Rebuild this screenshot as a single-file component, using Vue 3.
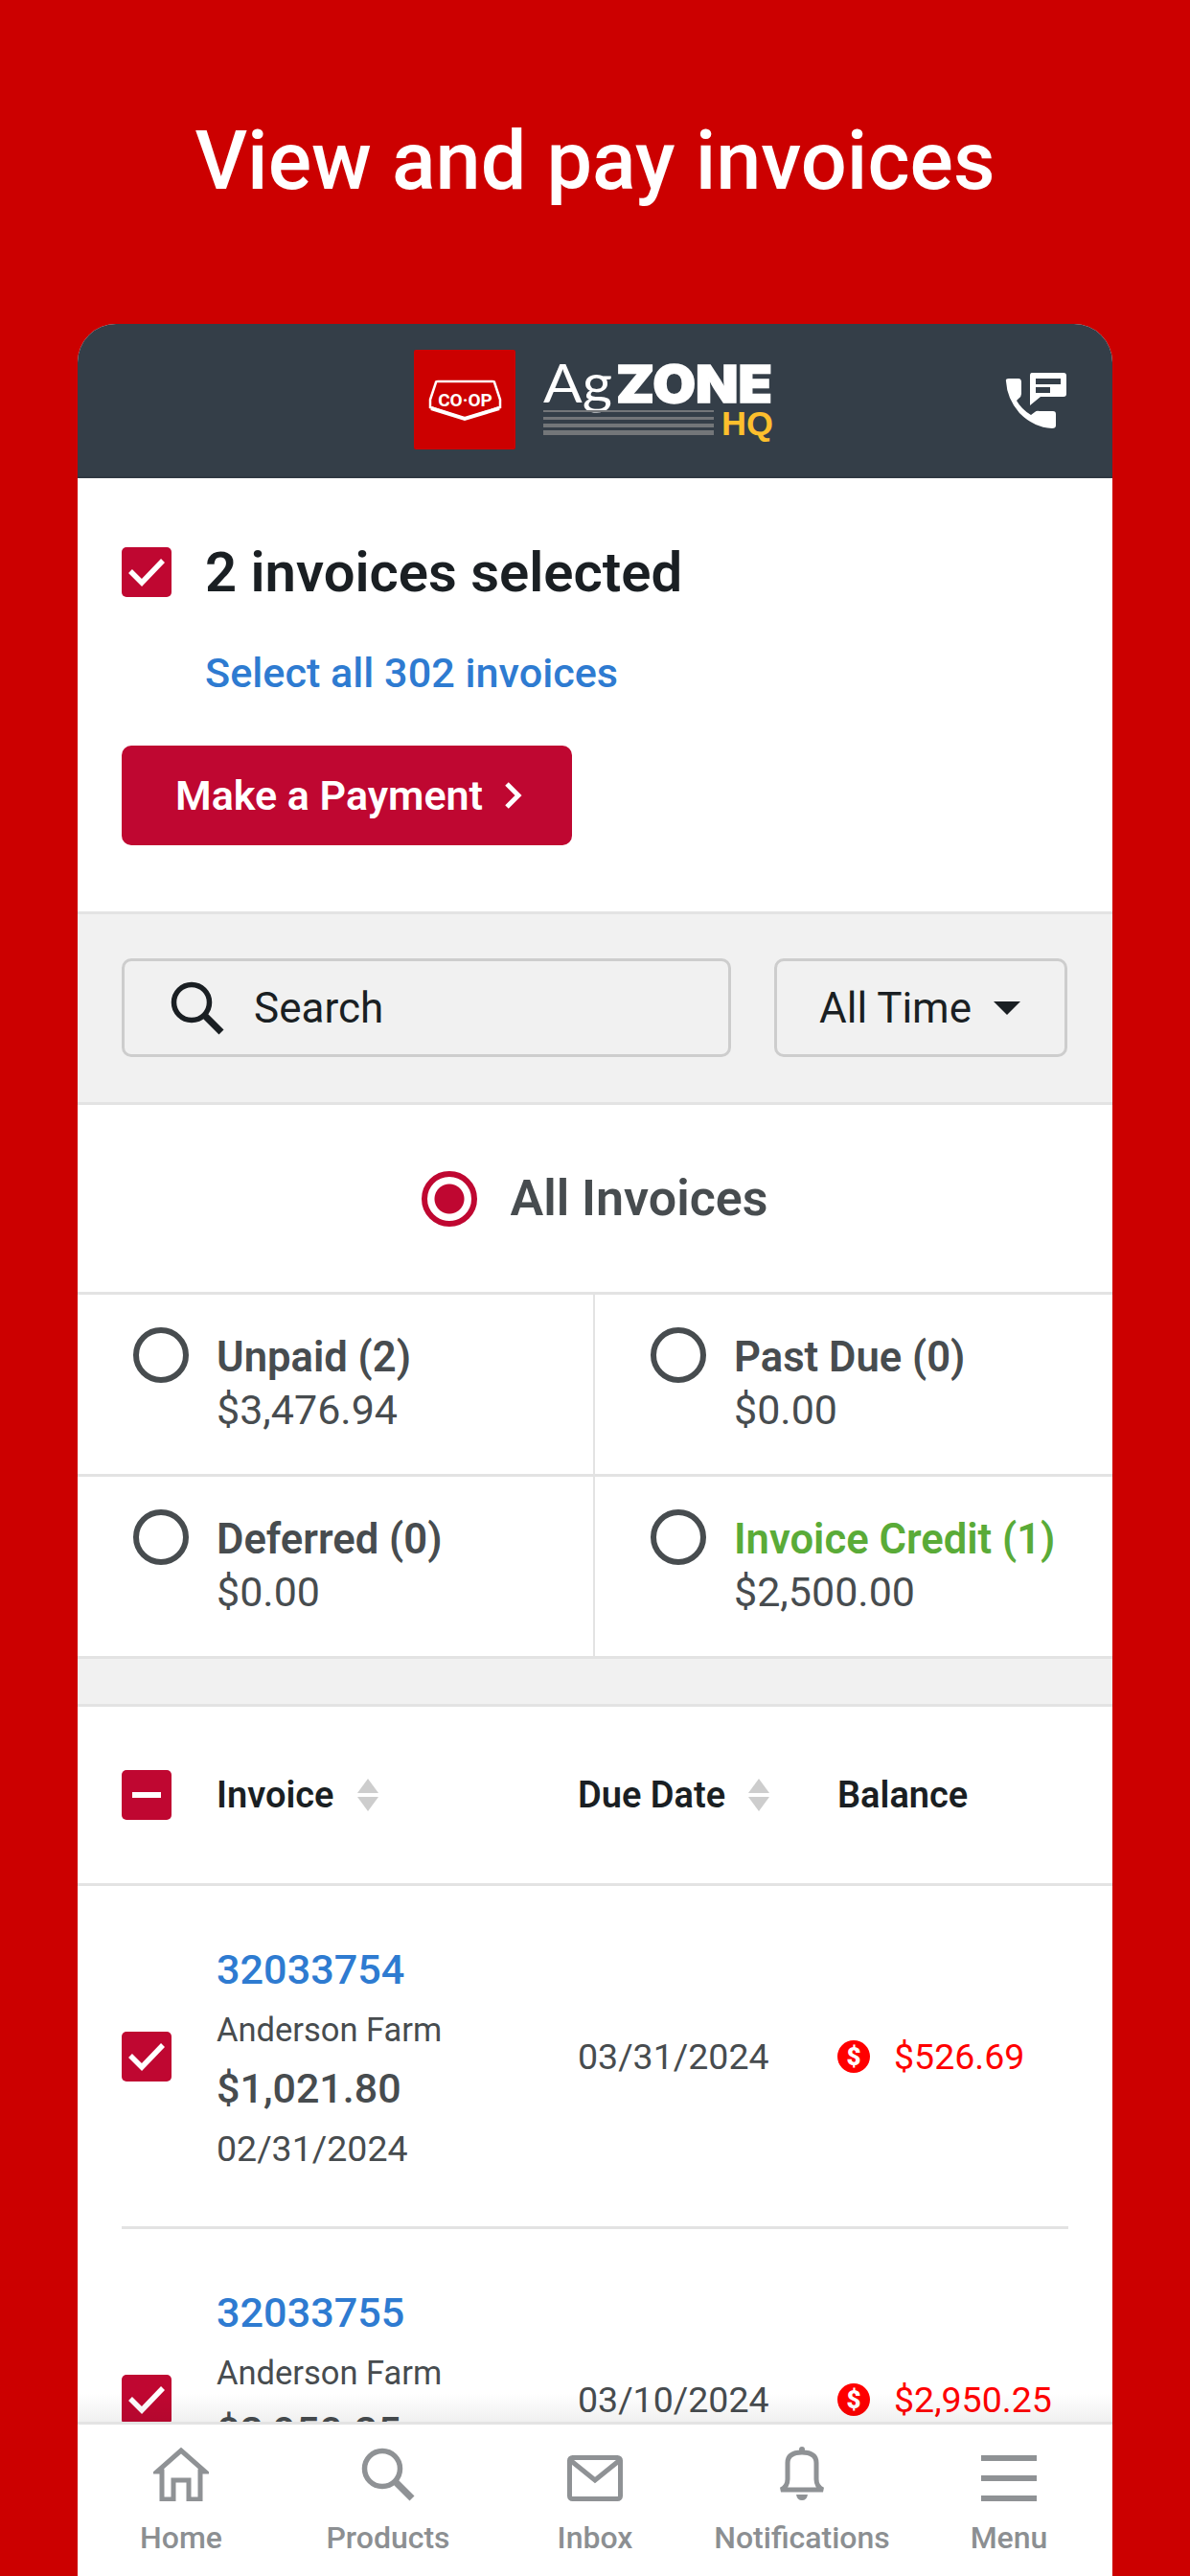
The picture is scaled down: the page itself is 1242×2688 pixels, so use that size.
<template>
  <div class="screen">
    <h1 class="title">View and pay invoices</h1>
    <div class="card">
      <header class="topbar">
        <div></div>
        <svg class="logo" width="380" height="106" viewBox="0 0 380 106">
          <rect x="0" y="0" width="106" height="104" rx="2" fill="#cc0000" />
          <path d="M23 34 Q23 33 25 33 H82 Q84 33 84 34 L90 52 V60 L53 72 L17 60 V52 Z" fill="none" stroke="#fff" stroke-width="2.5" />
          <path d="M18 61 L53 72 L89 61" fill="none" stroke="#fff" stroke-width="4" />
          <text x="53.5" y="59" class="logo-coop" text-anchor="middle">CO·OP</text>
          <text x="135" y="55" class="logo-ag" textLength="72" lengthAdjust="spacingAndGlyphs">Ag</text>
          <text x="211" y="55" class="logo-zone" textLength="163" lengthAdjust="spacingAndGlyphs">ZONE</text>
          <rect x="135" y="63" width="178" height="2" fill="#737679" />
          <rect x="135" y="70" width="178" height="3" fill="#737679" />
          <rect x="135" y="77" width="178" height="4" fill="#737679" />
          <rect x="135" y="84" width="178" height="5" fill="#737679" />
          <text x="321" y="89" class="logo-hq" textLength="54" lengthAdjust="spacingAndGlyphs">HQ</text>
        </svg>
        <svg class="phone" width="64" height="58" viewBox="0 0 64 58">
          <path d="M1 9 Q0 6 4 6 H14 Q17 6 17 10 V22 Q17 25 14 27 L12 29 Q17 38 27 44 L31 41 Q33 39 36 40 H50 Q53 40 53 43 V55 Q53 58 49 58 Q30 57 15 42 Q2 27 1 9 Z" fill="#fff" />
          <path d="M28 0 H61 Q64 0 64 3 V22 Q64 25 61 25 H37 L26 34 V3 Q26 0 28 0 Z" fill="#fff" />
          <rect x="32" y="6" width="26" height="6" fill="#343e48" />
          <rect x="32" y="15" width="15" height="6" fill="#343e48" />
        </svg>
      </header>

      <div class="content">
        <section class="selection">
          <div class="selected-row">
            <span class="check"><svg width="40" height="30" viewBox="0 0 40 30"><path d="M3 14 L15 26 L37 3" fill="none" stroke="#fff" stroke-width="5.5" /></svg></span>
            <span class="selected-text">2 invoices selected</span>
          </div>
          <a class="select-all">Select all 302 invoices</a>
          <button class="pay-btn">
            Make a Payment
            <svg width="19" height="30" viewBox="0 0 19 30"><path d="M3 3 L15 15 L3 27" fill="none" stroke="#fff" stroke-width="5" /></svg>
          </button>
        </section>

        <section class="filters">
          <div class="search">
            <svg width="56" height="56" viewBox="0 0 56 56"><circle cx="22" cy="22" r="18.5" fill="none" stroke="#1a1f23" stroke-width="5.5" /><path d="M35 35 L53 53" stroke="#1a1f23" stroke-width="7" /></svg>
            <span>Search</span>
          </div>
          <div class="time">
            <span>All Time</span>
            <i class="caret"></i>
          </div>
        </section>

        <section class="all-invoices">
          <span class="radio on"></span>
          <span>All Invoices</span>
        </section>

        <section class="statuses">
          <div v-for="s in statuses" :key="s.label" class="status">
            <span class="radio"></span>
            <div class="status-text">
              <div class="status-label" :class="{ credit: s.credit }">{{ s.label }}</div>
              <div class="status-amount">{{ s.amount }}</div>
            </div>
          </div>
        </section>

        <div class="band"></div>

        <div class="thead">
          <span class="check"><i class="minus"></i></span>
          <div class="th">Invoice <span class="sort"></span></div>
          <div class="th">Due Date <span class="sort"></span></div>
          <div class="th">Balance</div>
        </div>

        <div v-for="r in rows" :key="r.no" class="row">
          <span class="check small"><svg width="40" height="30" viewBox="0 0 40 30"><path d="M3 14 L15 26 L37 3" fill="none" stroke="#fff" stroke-width="5.5" /></svg></span>
          <div class="inv">
            <a class="inv-no">{{ r.no }}</a>
            <div class="inv-farm">Anderson Farm</div>
            <div class="inv-total">{{ r.total }}</div>
            <div class="inv-date">{{ r.invDate }}</div>
          </div>
          <div class="due">{{ r.due }}</div>
          <div class="bal">
            <span class="dollar">$</span>
            {{ r.balance }}
          </div>
        </div>
      </div>

      <nav class="tabs">
        <div class="tab">
          <svg width="58" height="56" viewBox="0 0 58 56" fill="none" stroke="#8f9295" stroke-width="5"><path d="M9 54 V25 H4 L29 3 L54 25 H49 V54 H37 V34 H21 V54 Z" /></svg>
          <span>Home</span>
        </div>
        <div class="tab">
          <svg width="58" height="56" viewBox="0 0 56 56" fill="none" stroke="#8f9295"><circle cx="22" cy="22" r="18.5" stroke-width="5.5" /><path d="M35 35 L53 53" stroke-width="7" /></svg>
          <span>Products</span>
        </div>
        <div class="tab">
          <svg width="58" height="48" viewBox="0 0 58 48" fill="none" stroke="#8f9295" stroke-width="5"><rect x="2.5" y="2.5" width="53" height="43" rx="3" /><path d="M3 5 L29 26 L55 5" /></svg>
          <span>Inbox</span>
        </div>
        <div class="tab">
          <svg width="48" height="58" viewBox="0 0 48 58" fill="none" stroke="#8f9295" stroke-width="5"><path d="M2 46 Q9 43 9 35 V18 Q9 7 24 7 Q39 7 39 18 V35 Q39 43 46 46 Z" /><circle cx="24" cy="4" r="3" fill="#8f9295" stroke="none" /><path d="M18 51 H30 Q29 57 24 57 Q19 57 18 51 Z" fill="#8f9295" stroke="none" /></svg>
          <span>Notifications</span>
        </div>
        <div class="tab">
          <svg width="58" height="48" viewBox="0 0 58 48" fill="#8f9295"><rect width="58" height="6" /><rect y="21" width="58" height="6" /><rect y="42" width="58" height="6" /></svg>
          <span>Menu</span>
        </div>
      </nav>
    </div>
  </div>
</template>

<script setup>
const statuses = [
  { label: 'Unpaid (2)', amount: '$3,476.94' },
  { label: 'Past Due (0)', amount: '$0.00' },
  { label: 'Deferred (0)', amount: '$0.00' },
  { label: 'Invoice Credit (1)', amount: '$2,500.00', credit: true }
]

const rows = [
  { no: '32033754', total: '$1,021.80', invDate: '02/31/2024', due: '03/31/2024', balance: '$526.69' },
  { no: '32033755', total: '$2,950.25', invDate: '02/10/2024', due: '03/10/2024', balance: '$2,950.25' }
]
</script>

<style>
html, body {
  margin: 0;
  background: #cc0000;
}
</style>

<style scoped>
.screen {
  width: 1242px;
  height: 2688px;
  background: #cc0000;
  font-family: Roboto, "Liberation Sans", sans-serif;
  display: flex;
  flex-direction: column;
  overflow: hidden;
}

.title {
  margin: 0;
  height: 338px;
  box-sizing: border-box;
  padding-top: 118px;
  text-align: center;
  color: #fff;
  font-size: 84.7px;
  line-height: 100px;
  font-weight: 500;
}

.card {
  margin: 0 81px;
  flex: 1;
  min-height: 0;
  background: #fff;
  border-radius: 40px 40px 0 0;
  overflow: hidden;
  display: flex;
  flex-direction: column;
}

.topbar {
  height: 161px;
  flex: none;
  box-sizing: border-box;
  background: #343e48;
  border-bottom: 2px solid #2f3842;
  display: grid;
  grid-template-columns: 1fr auto 1fr;
  align-items: center;
}

.logo {
  display: block;
  margin-left: 2px;
}

.phone {
  justify-self: end;
  margin-right: 48px;
}

.logo-coop {
  font: 700 19px Roboto, sans-serif;
  fill: #fff;
}

.logo-ag {
  font: 400 56px Lato, sans-serif;
  fill: #fff;
}

.logo-zone {
  font: 900 54px Inter, sans-serif;
  fill: #fff;
  stroke: #fff;
  stroke-width: 1.5px;
}

.logo-hq {
  font: 700 35px "Liberation Sans", sans-serif;
  fill: #fdbf2d;
}

.content {
  flex: 1;
  min-height: 0;
  overflow: hidden;
}

.selection {
  height: 452px;
  box-sizing: border-box;
  padding: 72px 46px 0;
}

.selected-row {
  display: flex;
  align-items: center;
  gap: 35px;
  height: 52px;
}

.check {
  width: 52px;
  height: 52px;
  flex: none;
  background: #bf0731;
  border-radius: 5px;
  display: flex;
  align-items: center;
  justify-content: center;
}

.selected-text {
  font-size: 58px;
  font-weight: 600;
  color: #1a1f23;
}

.select-all {
  display: block;
  margin: 52px 0 0 87px;
  font-size: 43.2px;
  line-height: 56px;
  font-weight: 500;
  color: #2e7bd1;
}

.pay-btn {
  margin-top: 47px;
  width: 470px;
  height: 104px;
  border: 0;
  border-radius: 10px;
  background: #bf0731;
  color: #fff;
  font: 600 43px Roboto, sans-serif;
  display: flex;
  align-items: center;
  gap: 22px;
  padding: 0 0 0 56px;
}

.filters {
  height: 202px;
  box-sizing: border-box;
  padding-top: 46px;
  padding-left: 46px;
  background: #f1f1f1;
  border-top: 3px solid #e3e3e3;
  border-bottom: 3px solid #e3e3e3;
  display: flex;
  gap: 45px;
}

.search, .time {
  height: 103px;
  box-sizing: border-box;
  border: 3px solid #cdcdcd;
  border-radius: 10px;
  display: flex;
  align-items: center;
  font-size: 44px;
  color: #1a1f23;
}

.search {
  width: 636px;
  padding-left: 48px;
  gap: 31px;
}

.time {
  width: 306px;
  padding-left: 44px;
  gap: 23px;
}

.caret {
  width: 0;
  height: 0;
  border-left: 14px solid transparent;
  border-right: 14px solid transparent;
  border-top: 14px solid #1a1f23;
}

.all-invoices {
  height: 195px;
  display: flex;
  align-items: center;
  justify-content: center;
  gap: 34px;
  font-size: 52px;
  font-weight: 600;
  color: #474c4f;
}

.radio {
  width: 58px;
  height: 58px;
  flex: none;
  box-sizing: border-box;
  border: 6px solid #474c4f;
  border-radius: 50%;
}

.radio.on {
  border-color: #bf0731;
  background: radial-gradient(circle, #bf0731 0 15px, #fff 16px);
}

.statuses {
  display: grid;
  grid-template-columns: 1fr 1fr;
  border-top: 3px solid #e3e3e3;
}

.status {
  height: 190px;
  box-sizing: border-box;
  padding: 34px 0 0 58px;
  display: flex;
  gap: 29px;
  border-bottom: 3px solid #e3e3e3;
  color: #474c4f;
}

.status:nth-child(odd) {
  border-right: 2px solid #e3e3e3;
}

.status-text {
  padding-top: 5px;
}

.status-label {
  font-size: 43.6px;
  line-height: 54px;
  font-weight: 600;
}

.status-label.credit {
  color: #5aab38;
}

.status-amount {
  font-size: 43px;
  line-height: 54px;
}

.band {
  height: 47px;
  background: #f1f1f1;
  border-bottom: 3px solid #e3e3e3;
}

.thead, .row {
  display: grid;
  grid-template-columns: 99px 377px 271px 1fr;
  margin: 0 46px;
  align-items: center;
}

.thead {
  height: 184px;
  margin: 0;
  padding: 0 46px;
  border-bottom: 3px solid #e3e3e3;
}

.th {
  display: flex;
  align-items: center;
  gap: 24px;
  font-size: 38px;
  font-weight: 600;
  color: #1a1f23;
}

.minus {
  width: 30px;
  height: 6px;
  background: #fff;
}

.sort {
  position: relative;
  width: 23px;
  height: 34px;
}

.sort::before, .sort::after {
  content: "";
  position: absolute;
  left: 0;
  border-left: 11.5px solid transparent;
  border-right: 11.5px solid transparent;
}

.sort::before {
  top: 0;
  border-bottom: 15px solid #cdcdcd;
}

.sort::after {
  bottom: 0;
  border-top: 15px solid #cdcdcd;
}

.row {
  height: 358px;
  box-sizing: border-box;
  border-bottom: 3px solid #e3e3e3;
}

.inv {
  padding-top: 6px;
  color: #474c4f;
}

.inv-no {
  display: block;
  font-size: 43.2px;
  line-height: 64px;
  font-weight: 500;
  color: #2e7bd1;
}

.inv-farm {
  font-size: 34.5px;
  line-height: 60px;
}

.inv-total {
  font-size: 43px;
  line-height: 62px;
  font-weight: 500;
}

.inv-date {
  font-size: 37.5px;
  line-height: 64px;
}

.due {
  font-size: 37.5px;
  color: #474c4f;
}

.bal {
  display: flex;
  align-items: center;
  gap: 25px;
  font-size: 37.5px;
  color: #ff0000;
  white-space: nowrap;
}

.dollar {
  width: 34px;
  height: 34px;
  border-radius: 50%;
  background: #ff0000;
  color: #fff;
  font-size: 26px;
  font-weight: 900;
  line-height: 34px;
  text-align: center;
}

.tabs {
  position: relative;
  height: 161px;
  flex: none;
  background: #fff;
  border-top: 3px solid #e3e3e3;
  box-sizing: border-box;
  display: grid;
  grid-template-columns: repeat(5, 1fr);
}

.tabs::before {
  content: "";
  position: absolute;
  left: 0;
  right: 0;
  top: -33px;
  height: 30px;
  background: linear-gradient(rgba(0, 0, 0, 0), rgba(0, 0, 0, 0.06));
}

.tab {
  display: flex;
  flex-direction: column;
  align-items: center;
  justify-content: flex-end;
  gap: 19px;
  padding-bottom: 19px;
  font-size: 32px;
  font-weight: 500;
  color: #8c8f92;
  height: 137px;
}
</style>
